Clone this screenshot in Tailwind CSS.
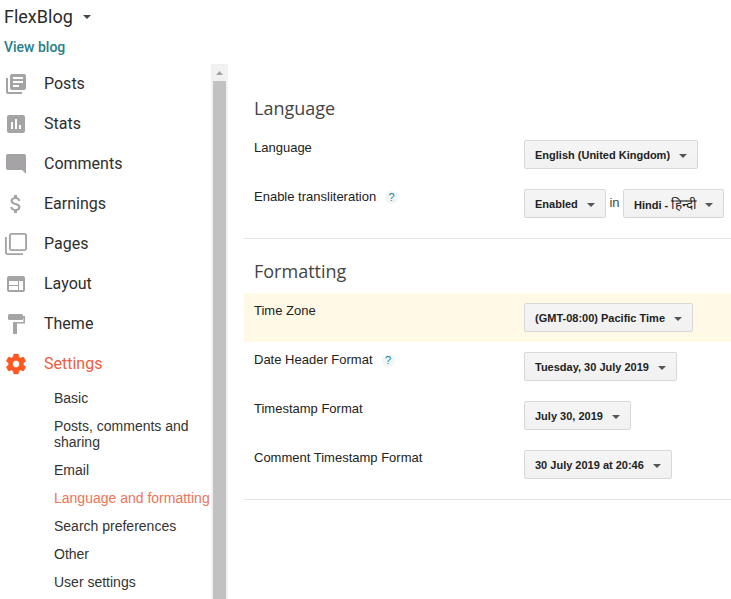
<!DOCTYPE html>
<html lang="en">
<head>
<meta charset="utf-8">
<title>FlexBlog</title>
<script src="https://cdn.jsdelivr.net/npm/@tailwindcss/browser@4"></script>
</head>
<body class="bg-white w-[731px] h-[599px] overflow-hidden flex font-['Liberation_Sans',Arial,sans-serif] text-[#222]">
<aside class="w-[228px] h-full flex flex-col shrink-0">
  <header class="h-16 shrink-0 pl-1 font-['Roboto',sans-serif]">
    <div class="flex items-center h-[34px] text-[18px] leading-[34px] text-[#2a2a2a]"><span class="w-[69px] whitespace-nowrap">FlexBlog</span><svg class="ml-[10px]" width="8" height="4" viewBox="0 0 8 4"><path d="M0 0h8L4 4z" fill="#444"/></svg></div>
    <a class="block mt-[5px] text-sm leading-4 font-medium text-[#27808a]">View blog</a>
  </header>
  <div class="flex flex-1 min-h-0">
    <nav class="w-[211px] shrink-0">
      <ul class="pl-1 font-['Roboto',sans-serif] text-base text-[#2e2e2e] fill-[#a5a3a5]">
        <li class="h-10 flex items-center gap-4"><svg width="24" height="24" viewBox="0 0 24 24"><path d="M4 6H2v14c0 1.100.9 2 2 2h14v-2H4V6zm16-4H8c-1.100 0-2 .9-2 2v12c0 1.100.9 2 2 2h12c1.100 0 2-.9 2-2V4c0-1.100-.9-2-2-2zm-1 9H9V9h10v2zm-4 4H9v-2h6v2zm4-8H9V5h10v2z"/></svg><span class="-mt-px">Posts</span></li>
        <li class="h-10 flex items-center gap-4"><svg width="24" height="24" viewBox="0 0 24 24"><path d="M19 3H5c-1.100 0-2 .9-2 2v14c0 1.100.9 2 2 2h14c1.100 0 2-.9 2-2V5c0-1.100-.9-2-2-2zM9 17H7v-7h2v7zm4 0h-2V7h2v10zm4 0h-2v-4h2v4z"/></svg><span class="-mt-px">Stats</span></li>
        <li class="h-10 flex items-center gap-4"><svg width="24" height="24" viewBox="0 0 24 24"><path d="M21.990 4c0-1.100-.890-2-1.990-2H4c-1.100 0-2 .9-2 2v12c0 1.100.9 2 2 2h14l4 4-.010-18z"/></svg><span class="-mt-px">Comments</span></li>
        <li class="h-10 flex items-center gap-4"><svg width="24" height="24" viewBox="0 0 24 24"><path d="M11.800 10.900c-2.270-.590-3-1.200-3-2.150 0-1.090 1.010-1.850 2.700-1.850 1.780 0 2.440.850 2.500 2.100h2.210c-.070-1.720-1.120-3.300-3.210-3.810V3h-3v2.160c-1.940.420-3.500 1.680-3.500 3.610 0 2.310 1.910 3.460 4.700 4.130 2.500.6 3 1.480 3 2.410 0 .690-.490 1.790-2.700 1.790-2.060 0-2.870-.920-2.980-2.100h-2.200c.120 2.190 1.760 3.420 3.680 3.830V21h3v-2.150c1.950-.370 3.500-1.500 3.500-3.550 0-2.840-2.430-3.810-4.700-4.400z"/></svg><span class="-mt-px">Earnings</span></li>
        <li class="h-10 flex items-center gap-4"><svg class="overflow-visible" width="24" height="24" viewBox="0 0 24 24" fill="none" stroke="#a5a3a5" stroke-width="1.900"><rect x="5.900" y="1.900" width="16.200" height="16.200" rx="1.500"/><path d="M1.900 5v15.600a1.500 1.500 0 0 0 1.500 1.500H19"/></svg><span class="-mt-px">Pages</span></li>
        <li class="h-10 flex items-center gap-4"><svg width="24" height="24" viewBox="0 0 24 24"><path fill-rule="evenodd" d="M5 4h14a2 2 0 0 1 2 2v12a2 2 0 0 1-2 2H5a2 2 0 0 1-2-2V6a2 2 0 0 1 2-2zM5 9v4h9V9zM5 14v4h9v-4zM15 9v9h4V9z"/></svg><span class="-mt-px">Layout</span></li>
        <li class="h-10 flex items-center gap-4"><svg width="24" height="24" viewBox="0 0 24 24"><rect x="4" y="2" width="15" height="6" rx="1.500"/><path d="M19 4h2v7.500h-8V22H9V10h10.400V5.500H19z"/></svg><span class="-mt-px">Theme</span></li>
        <li class="h-10 flex items-center gap-4 text-[#ef5b3c]"><svg fill="#ff5722" stroke="#ff5722" stroke-width=".4" stroke-linejoin="round" width="24" height="24" viewBox="0 0 24 24"><path d="M19.430 12.980c.040-.320.070-.640.070-.980s-.030-.660-.070-.980l2.110-1.650c.190-.150.240-.420.120-.640l-2-3.460c-.120-.220-.390-.3-.610-.220l-2.490 1c-.520-.4-1.080-.730-1.690-.980l-.380-2.650C14.460 2.180 14.250 2 14 2h-4c-.250 0-.460.180-.490.420l-.380 2.650c-.610.250-1.170.590-1.690.980l-2.490-1c-.230-.090-.490 0-.610.220l-2 3.460c-.130.220-.070.490.120.640l2.110 1.650c-.040.320-.070.650-.070.980s.030.660.070.980l-2.110 1.650c-.190.150-.240.420-.120.640l2 3.460c.120.220.390.3.610.220l2.490-1c.520.4 1.080.730 1.690.980l.380 2.650c.030.240.240.420.490.420h4c.250 0 .460-.180.490-.420l.380-2.650c.610-.250 1.170-.590 1.690-.980l2.490 1c.230.090.490 0 .610-.220l2-3.460c.120-.220.070-.490-.120-.640l-2.110-1.650zM12 15.500c-1.930 0-3.500-1.570-3.500-3.500s1.570-3.500 3.500-3.500 3.500 1.570 3.500 3.500-1.570 3.500-3.500 3.500z"/></svg><span class="-mt-px">Settings</span></li>
      </ul>
      <ul class="pl-[54px] text-sm leading-4 whitespace-nowrap text-[#333]">
        <li class="py-[6px]">Basic</li>
        <li class="py-[6px]">Posts, comments and<br>sharing</li>
        <li class="py-[6px]">Email</li>
        <li class="py-[6px] text-[#ee7358]">Language and formatting</li>
        <li class="py-[6px]">Search preferences</li>
        <li class="py-[6px]">Other</li>
        <li class="py-[6px]">User settings</li>
      </ul>
    </nav>
    <div class="w-[17px] bg-[#f1f1f1] flex flex-col items-center">
      <div class="h-[17px] shrink-0 flex items-center"><svg width="7" height="4" viewBox="0 0 7 4"><path d="M0 4h7L3.500 0z" fill="#a3a3a3"/></svg></div>
      <div class="w-[13px] flex-1 bg-[#c1c1c1]"></div>
    </div>
  </div>
</aside>
<main class="flex-1 ml-4 pt-[86px] text-[13px]">
  <section class="h-[153px] border-b border-[#e5e5e5]">
    <h2 class="pl-[10px] h-11 leading-[44px] text-[18px] text-[#444] font-['Open_Sans',sans-serif]">Language</h2>
    <div class="h-[49px] flex items-start pl-[10px] pt-[10px]">
      <div class="w-[270px] leading-4">Language</div>
      <button class="w-[174px] h-[29px] border border-[#d8d8d8] rounded-xs bg-linear-to-b from-[#f5f5f5] to-[#f1f1f1] px-[10px] flex items-center justify-between text-[11px] font-bold whitespace-nowrap"><span class="pt-[2px]">English (United Kingdom)</span><svg class="mt-[3px]" width="8" height="4" viewBox="0 0 8 4"><path d="M0 0h8L4 4z" fill="#555"/></svg></button>
    </div>
    <div class="h-[49px] flex items-start pl-[10px] pt-[10px]">
      <div class="w-[270px] leading-4 flex"><span>Enable transliteration</span><span class="ml-[9px] mt-[2px] size-[13px] rounded-full bg-[#f1f5f6] text-[#23848c] text-[11px] leading-[13px] text-center">?</span></div>
      <button class="w-[82px] h-[29px] border border-[#d8d8d8] rounded-xs bg-linear-to-b from-[#f5f5f5] to-[#f1f1f1] px-[10px] flex items-center justify-between text-[11px] font-bold whitespace-nowrap"><span class="pt-[2px]">Enabled</span><svg class="mt-[3px]" width="8" height="4" viewBox="0 0 8 4"><path d="M0 0h8L4 4z" fill="#555"/></svg></button>
      <span class="w-[17px] text-center pt-[6px] leading-4 text-[#444]">in</span>
      <button class="w-[101px] h-[29px] border border-[#d8d8d8] rounded-xs bg-linear-to-b from-[#f5f5f5] to-[#f1f1f1] px-[10px] flex items-center justify-between text-[11px] font-bold whitespace-nowrap"><span class="flex items-baseline gap-[3px] h-[14px] leading-[14px] pt-px"><span>Hindi -</span><span class="text-[13.500px] font-medium">हिन्दी</span></span><svg class="mt-[3px]" width="8" height="4" viewBox="0 0 8 4"><path d="M0 0h8L4 4z" fill="#555"/></svg></button>
    </div>
  </section>
  <section class="pt-[10px] h-[261px] border-b border-[#e5e5e5]">
    <h2 class="pl-[10px] h-11 leading-[44px] text-[18px] text-[#444] font-['Open_Sans',sans-serif]">Formatting</h2>
    <div class="h-[49px] flex items-start pl-[10px] pt-[10px] bg-[#fff9e5]">
      <div class="w-[270px] leading-4">Time Zone</div>
      <button class="w-[169px] h-[29px] border border-[#d8d8d8] rounded-xs bg-linear-to-b from-[#f5f5f5] to-[#f1f1f1] px-[10px] flex items-center justify-between text-[11px] font-bold whitespace-nowrap"><span class="pt-[2px]">(GMT-08:00) Pacific Time</span><svg class="mt-[3px]" width="8" height="4" viewBox="0 0 8 4"><path d="M0 0h8L4 4z" fill="#555"/></svg></button>
    </div>
    <div class="h-[49px] flex items-start pl-[10px] pt-[10px]">
      <div class="w-[270px] leading-4 flex"><span>Date Header Format</span><span class="ml-[9px] mt-[2px] size-[13px] rounded-full bg-[#f1f5f6] text-[#23848c] text-[11px] leading-[13px] text-center">?</span></div>
      <button class="w-[153px] h-[29px] border border-[#d8d8d8] rounded-xs bg-linear-to-b from-[#f5f5f5] to-[#f1f1f1] px-[10px] flex items-center justify-between text-[11px] font-bold whitespace-nowrap"><span class="pt-[2px]">Tuesday, 30 July 2019</span><svg class="mt-[3px]" width="8" height="4" viewBox="0 0 8 4"><path d="M0 0h8L4 4z" fill="#555"/></svg></button>
    </div>
    <div class="h-[49px] flex items-start pl-[10px] pt-[10px]">
      <div class="w-[270px] leading-4">Timestamp Format</div>
      <button class="w-[107px] h-[29px] border border-[#d8d8d8] rounded-xs bg-linear-to-b from-[#f5f5f5] to-[#f1f1f1] px-[10px] flex items-center justify-between text-[11px] font-bold whitespace-nowrap"><span class="pt-[2px]">July 30, 2019</span><svg class="mt-[3px]" width="8" height="4" viewBox="0 0 8 4"><path d="M0 0h8L4 4z" fill="#555"/></svg></button>
    </div>
    <div class="h-[49px] flex items-start pl-[10px] pt-[10px]">
      <div class="w-[270px] leading-4">Comment Timestamp Format</div>
      <button class="w-[148px] h-[29px] border border-[#d8d8d8] rounded-xs bg-linear-to-b from-[#f5f5f5] to-[#f1f1f1] px-[10px] flex items-center justify-between text-[11px] font-bold whitespace-nowrap"><span class="pt-[2px]">30 July 2019 at 20:46</span><svg class="mt-[3px]" width="8" height="4" viewBox="0 0 8 4"><path d="M0 0h8L4 4z" fill="#555"/></svg></button>
    </div>
  </section>
</main>
</body>
</html>
